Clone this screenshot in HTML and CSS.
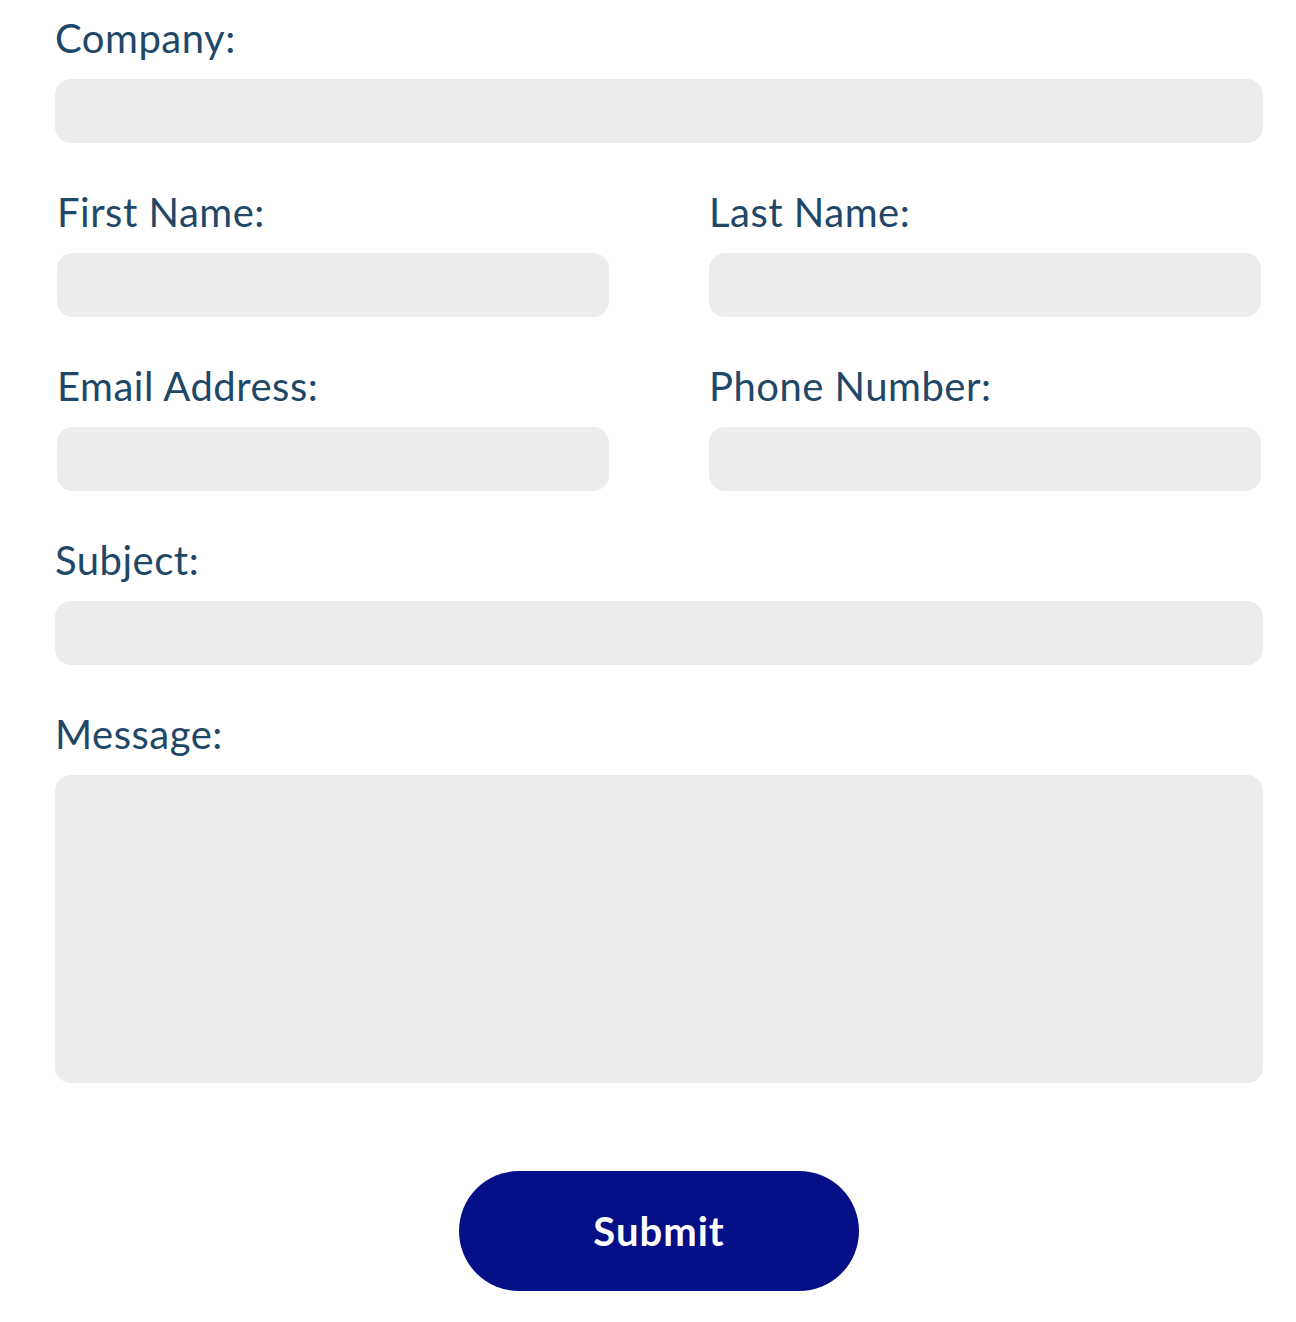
FILE: index.html
```html
<!DOCTYPE html>
<html lang="en">
<head>
<meta charset="utf-8">
<title>Contact form</title>
<link rel="stylesheet" href="styles.css">
</head>
<body>
<form class="contact">
  <div class="field">
    <label class="label" for="company">Company:</label>
    <input class="input" id="company" type="text">
  </div>
  <div class="row">
    <div class="field">
      <label class="label" for="first">First Name:</label>
      <input class="input" id="first" type="text">
    </div>
    <div class="field">
      <label class="label" for="last">Last Name:</label>
      <input class="input" id="last" type="text">
    </div>
  </div>
  <div class="row">
    <div class="field">
      <label class="label" for="email">Email Address:</label>
      <input class="input" id="email" type="email">
    </div>
    <div class="field">
      <label class="label" for="phone">Phone Number:</label>
      <input class="input" id="phone" type="tel">
    </div>
  </div>
  <div class="field">
    <label class="label" for="subject">Subject:</label>
    <input class="input" id="subject" type="text">
  </div>
  <div class="field">
    <label class="label" for="message">Message:</label>
    <textarea class="input textarea" id="message"></textarea>
  </div>
  <div class="actions">
    <button class="submit" type="button">Submit</button>
  </div>
</form>
</body>
</html>
```
FILE: styles.css
```css
html, body {
  margin: 0;
  padding: 0;
  background: #ffffff;
}

body {
  font-family: Lato, "Open Sans", sans-serif;
}

.contact {
  display: flex;
  flex-direction: column;
  gap: 45px;
  padding: 14px 33px 0 55px;
}

.field {
  display: flex;
  flex-direction: column;
}

.row {
  display: grid;
  grid-template-columns: 1fr 1fr;
  column-gap: 100px;
  padding: 0 2px;
}

.label {
  display: block;
  font-size: 40px;
  line-height: 48px;
  height: 48px;
  margin-bottom: 17px;
  color: #1f4768;
  font-weight: 400;
  letter-spacing: 0.5px;
}

.input {
  display: block;
  box-sizing: border-box;
  width: 100%;
  height: 64px;
  border: none;
  border-radius: 16px;
  background: #ececec;
  margin: 0;
  padding: 0 20px;
  font-family: inherit;
  font-size: 24px;
  outline: none;
}

.textarea {
  height: 308px;
  resize: none;
  padding: 16px 20px;
}

.actions {
  display: flex;
  justify-content: center;
  margin-top: 43px;
}

.submit {
  width: 400px;
  height: 120px;
  border: none;
  border-radius: 60px;
  background: #040f88;
  color: #ffffff;
  font-family: inherit;
  font-size: 40px;
  font-weight: 700;
  letter-spacing: 1px;
  cursor: pointer;
}
```
